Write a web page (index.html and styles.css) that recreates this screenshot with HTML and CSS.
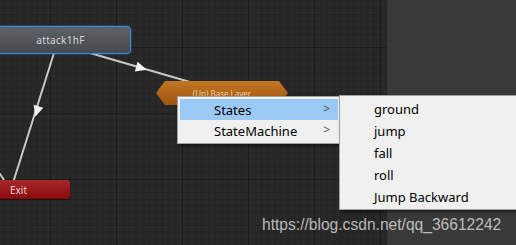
FILE: index.html
```html
<!DOCTYPE html>
<html lang="en">
<head>
    <meta charset="UTF-8">
    <title>Animator</title>
    <link rel="stylesheet" href="styles.css">
</head>
<body>
    <div class="graph">
        <svg class="links" width="387" height="245" viewBox="0 0 387 245">
            <!-- transitions -->
            <line x1="54" y1="53" x2="12" y2="186" stroke="#c8c8c8" stroke-width="2"/>
            <line x1="90" y1="53" x2="190" y2="82" stroke="#c8c8c8" stroke-width="2"/>
            <line x1="-4" y1="168" x2="4" y2="180" stroke="#c8c8c8" stroke-width="2"/>
            <polygon points="0,-6 5,5 -5,5" fill="#f4f4f4" transform="translate(37,111) rotate(197)"/>
            <polygon points="0,-6 5,5 -5,5" fill="#f4f4f4" transform="translate(141,68) rotate(106)"/>
        </svg>

        <div class="node state">attack1hF</div>
        <div class="node exit">Exit</div>
        <div class="layer"><span>(Up) Base Layer</span></div>
    </div>

    <div class="panel"></div>

    <ul class="menu main-menu">
        <li class="active">States <span class="more">&gt;</span></li>
        <li>StateMachine <span class="more">&gt;</span></li>
    </ul>

    <ul class="menu sub-menu">
        <li>ground</li>
        <li>jump</li>
        <li>fall</li>
        <li>roll</li>
        <li>Jump Backward</li>
    </ul>

    <div class="watermark">https://blog.csdn.net/qq_36612242</div>
</body>
</html>
```

FILE: styles.css
```css
body {
    margin: 0;
    width: 516px;
    height: 245px;
    overflow: hidden;
    position: relative;
    background: #2a2a2a;
    font-family: "Noto Sans", Arial, sans-serif;
}
.graph {
    position: absolute;
    left: 0;
    top: 0;
    width: 387px;
    height: 245px;
    background-color: #292929;
    background-image:
        linear-gradient(to right, #1b1b1b 1px, transparent 1px),
        linear-gradient(to bottom, #1b1b1b 1px, transparent 1px),
        linear-gradient(to right, #232323 1px, transparent 1px),
        linear-gradient(to bottom, #232323 1px, transparent 1px);
    background-size: 66px 66px, 66px 66px, 6.6px 6.6px, 6.6px 6.6px;
    background-position: 50px 47px, 50px 47px, 50px 47px, 50px 47px;
}
.links {
    position: absolute;
    left: 0;
    top: 0;
}
.node {
    position: absolute;
    box-sizing: border-box;
    font-size: 10px;
    display: flex;
    align-items: center;
    justify-content: center;
}
.state {
    left: -10px;
    top: 26px;
    width: 141px;
    height: 28px;
    border: 1px solid #3a8fe0;
    border-radius: 4px;
    background: linear-gradient(#5d6166, #474a4f);
    color: #d6d6d6;
    box-shadow: 0 0 2px #2b78c0;
    letter-spacing: 0.3px;
}
.exit {
    left: -10px;
    top: 180px;
    width: 80px;
    height: 19px;
    border-radius: 3px;
    background: linear-gradient(#a8292d, #8a0a0a);
    color: #e8cfcf;
    justify-content: flex-start;
    padding-left: 20px;
    box-shadow: 0 1px 1px #111;
}
.layer {
    position: absolute;
    left: 156px;
    top: 81px;
    width: 132px;
    height: 24px;
    background: linear-gradient(#c47622, #9c560f);
    clip-path: polygon(9px 0, 123px 0, 132px 12px, 123px 24px, 9px 24px, 0 12px);
    color: #ecd2b0;
    font-size: 8px;
    display: flex;
    justify-content: center;
    padding-top: 7px;
    box-sizing: border-box;
}
.panel {
    position: absolute;
    left: 387px;
    top: 0;
    width: 129px;
    height: 245px;
    background: #393939;
}
.menu {
    position: absolute;
    list-style: none;
    margin: 0;
    background: #f0f0f0;
    border: 1px solid #a0a0a0;
    box-shadow: 2px 2px 3px rgba(0, 0, 0, 0.45);
    font-size: 13px;
    color: #000;
    box-sizing: border-box;
}
.menu li {
    height: 21px;
    display: flex;
    align-items: center;
    position: relative;
}
.main-menu {
    left: 177px;
    top: 96px;
    width: 164px;
    height: 48px;
    padding: 2px;
}
.main-menu li {
    padding-left: 34px;
}
.main-menu li.active {
    background: #99c9f4;
}
.more {
    position: absolute;
    right: 8px;
    top: 1px;
    color: #555;
    font-size: 12px;
}
.sub-menu {
    left: 339px;
    top: 95px;
    width: 182px;
    height: 115px;
    padding: 2px 0;
}
.sub-menu li {
    height: 22px;
    padding-left: 34px;
}
.watermark {
    position: absolute;
    left: 262px;
    top: 216px;
    font-family: "Liberation Sans", Arial, sans-serif;
    font-size: 15.6px;
    color: rgba(225, 225, 225, 0.78);
    white-space: nowrap;
}
```
